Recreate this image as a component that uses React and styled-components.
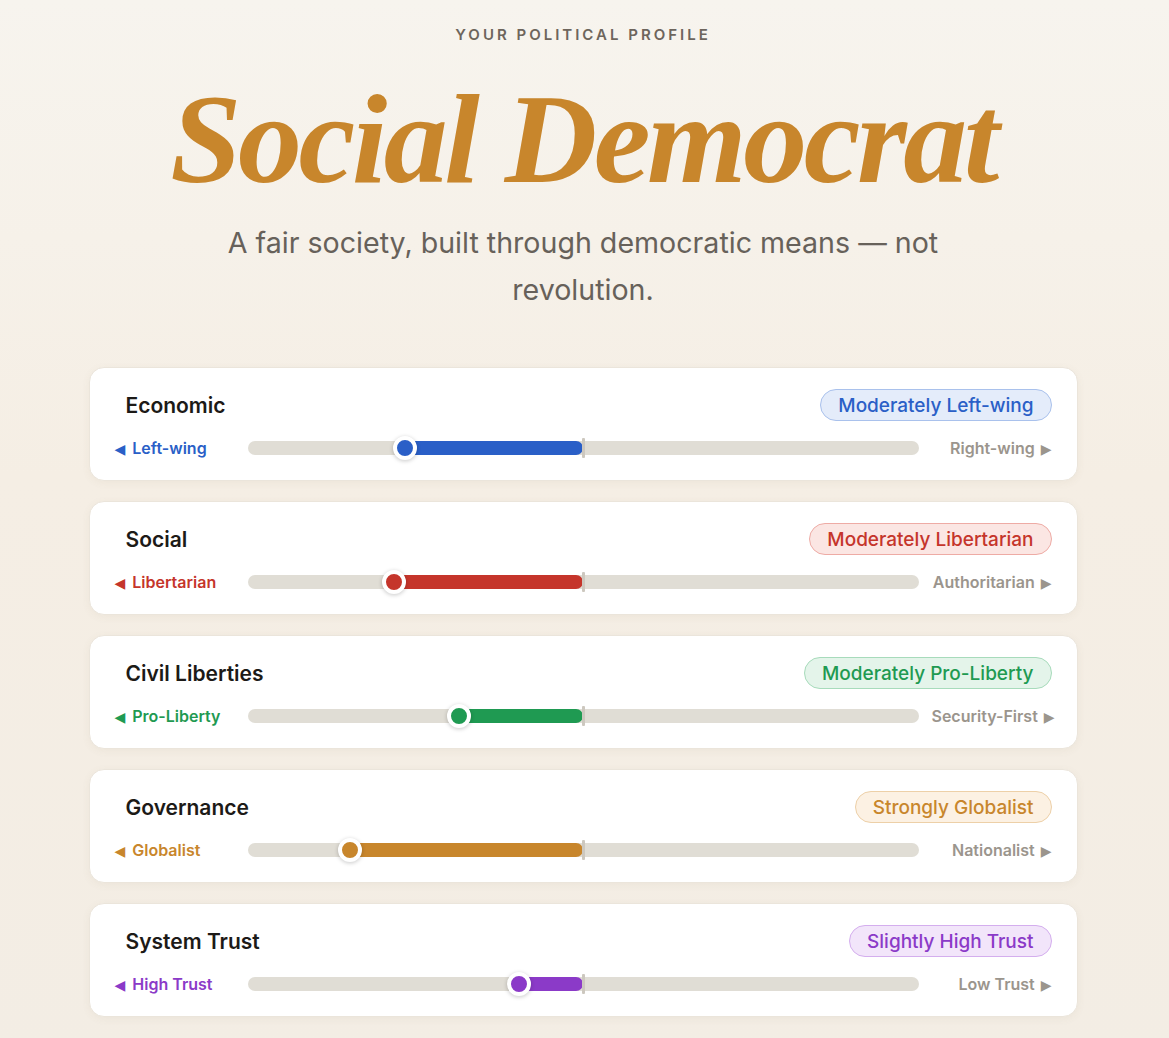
import styled, { createGlobalStyle } from "styled-components";

const GlobalStyle = createGlobalStyle`
  html, body {
    margin: 0;
    padding: 0;
  }
  body {
    background: linear-gradient(to bottom, #f7f4ee 0%, #f5eee4 45%, #f3ede4 100%);
    min-height: 1038px;
    font-family: Inter, "Noto Sans", "Liberation Sans", sans-serif;
    color: #1c1a17;
  }
`;

const Page = styled.main`
  padding: 25px 3px 40px 0;
  display: flex;
  flex-direction: column;
  align-items: center;
`;

const Overline = styled.div`
  font-size: 15px;
  font-weight: 600;
  letter-spacing: 3px;
  color: #6d655c;
  line-height: 20px;
`;

const Title = styled.h1`
  margin: 24px 0 0;
  font-family: "Liberation Serif", "Times New Roman", serif;
  font-style: italic;
  font-weight: 700;
  font-size: 128px;
  letter-spacing: -3.5px;
  line-height: 140px;
  color: #c8862c;
`;

const Subtitle = styled.p`
  margin: 10px 0 0;
  max-width: 780px;
  text-align: center;
  font-size: 28.6px;
  line-height: 47px;
  color: #67615a;
`;

const List = styled.section`
  width: 989px;
  margin-top: 54px;
  display: flex;
  flex-direction: column;
  gap: 20px;
`;

const Card = styled.article`
  background: #fff;
  border: 1px solid #ebe5db;
  border-radius: 15px;
  box-shadow: 0 2px 8px rgba(120, 100, 70, 0.06);
  padding: 21px 25px 19px;
  display: flex;
  flex-direction: column;
  gap: 14px;
`;

const Header = styled.div`
  display: flex;
  align-items: center;
  justify-content: space-between;
  padding-left: 11px;
`;

const AxisName = styled.h2`
  margin: 0;
  font-size: 21px;
  font-weight: 600;
  color: #1c1a17;
`;

const Badge = styled.span`
  box-sizing: border-box;
  height: 32px;
  display: inline-flex;
  align-items: center;
  padding: 0 17px;
  border-radius: 999px;
  font-size: 19px;
  font-weight: 500;
  color: ${(p) => p.$c.text};
  background: ${(p) => p.$c.bg};
  border: 1px solid ${(p) => p.$c.border};
`;

const Row = styled.div`
  display: grid;
  grid-template-columns: 120px 1fr 120px;
  column-gap: 13px;
  align-items: center;
  height: 26px;
`;

const Pole = styled.span`
  font-size: 16px;
  font-weight: 600;
  white-space: nowrap;
  color: ${(p) => p.$color};
  text-align: ${(p) => (p.$right ? "right" : "left")};
`;

const Arrow = styled.span`
  font-family: "DejaVu Sans", sans-serif;
  font-size: 14px;
  margin: ${(p) => (p.$right ? "0 0 0 6px" : "0 7px 0 0")};
`;

const Track = styled.div`
  position: relative;
  height: 14px;
  border-radius: 7px;
  background: #e0ddd5;
`;

const Fill = styled.div`
  position: absolute;
  top: 0;
  bottom: 0;
  border-radius: 0 7px 7px 0;
  background: ${(p) => p.$color};
`;

const CenterMark = styled.div`
  position: absolute;
  left: 50%;
  top: -3px;
  width: 3px;
  height: 20px;
  margin-left: -1px;
  border-radius: 1px;
  background: #cdc8bf;
`;

const Thumb = styled.div`
  position: absolute;
  top: 50%;
  width: 16px;
  height: 16px;
  border-radius: 50%;
  background: ${(p) => p.$color};
  border: 4px solid #fff;
  box-shadow: 0 1px 4px rgba(0, 0, 0, 0.22);
  transform: translate(-50%, -50%);
`;

const axes = [
  {
    name: "Economic",
    badge: "Moderately Left-wing",
    left: "Left-wing",
    right: "Right-wing",
    pos: 23.4,
    c: { text: "#2a5fc7", bg: "#e4ecfa", border: "#a9c1ec" },
  },
  {
    name: "Social",
    badge: "Moderately Libertarian",
    left: "Libertarian",
    right: "Authoritarian",
    pos: 21.9,
    c: { text: "#c5352b", bg: "#fbe6e3", border: "#eeaba5" },
  },
  {
    name: "Civil Liberties",
    badge: "Moderately Pro-Liberty",
    left: "Pro-Liberty",
    right: "Security-First",
    pos: 31.5,
    c: { text: "#1f9a52", bg: "#e4f4ea", border: "#a7dbbb" },
  },
  {
    name: "Governance",
    badge: "Strongly Globalist",
    left: "Globalist",
    right: "Nationalist",
    pos: 15.3,
    c: { text: "#c8862c", bg: "#fcf1e3", border: "#edd0a8" },
  },
  {
    name: "System Trust",
    badge: "Slightly High Trust",
    left: "High Trust",
    right: "Low Trust",
    pos: 40.4,
    c: { text: "#8b3ac8", bg: "#f2e5fa", border: "#d4aeee" },
  },
];

function AxisCard({ axis }) {
  return (
    <Card>
      <Header>
        <AxisName>{axis.name}</AxisName>
        <Badge $c={axis.c}>{axis.badge}</Badge>
      </Header>
      <Row>
        <Pole $color={axis.c.text}>
          <Arrow>◀</Arrow>
          {axis.left}
        </Pole>
        <Track>
          <Fill
            $color={axis.c.text}
            style={{ left: `${axis.pos}%`, right: "50%" }}
          />
          <CenterMark />
          <Thumb $color={axis.c.text} style={{ left: `${axis.pos}%` }} />
        </Track>
        <Pole $color="#9b958d" $right>
          {axis.right}
          <Arrow $right>▶</Arrow>
        </Pole>
      </Row>
    </Card>
  );
}

export default function App() {
  return (
    <>
      <GlobalStyle />
      <Page>
        <Overline>YOUR POLITICAL PROFILE</Overline>
        <Title>Social Democrat</Title>
        <Subtitle>
          A fair society, built through democratic means — not revolution.
        </Subtitle>
        <List>
          {axes.map((a) => (
            <AxisCard key={a.name} axis={a} />
          ))}
        </List>
      </Page>
    </>
  );
}
